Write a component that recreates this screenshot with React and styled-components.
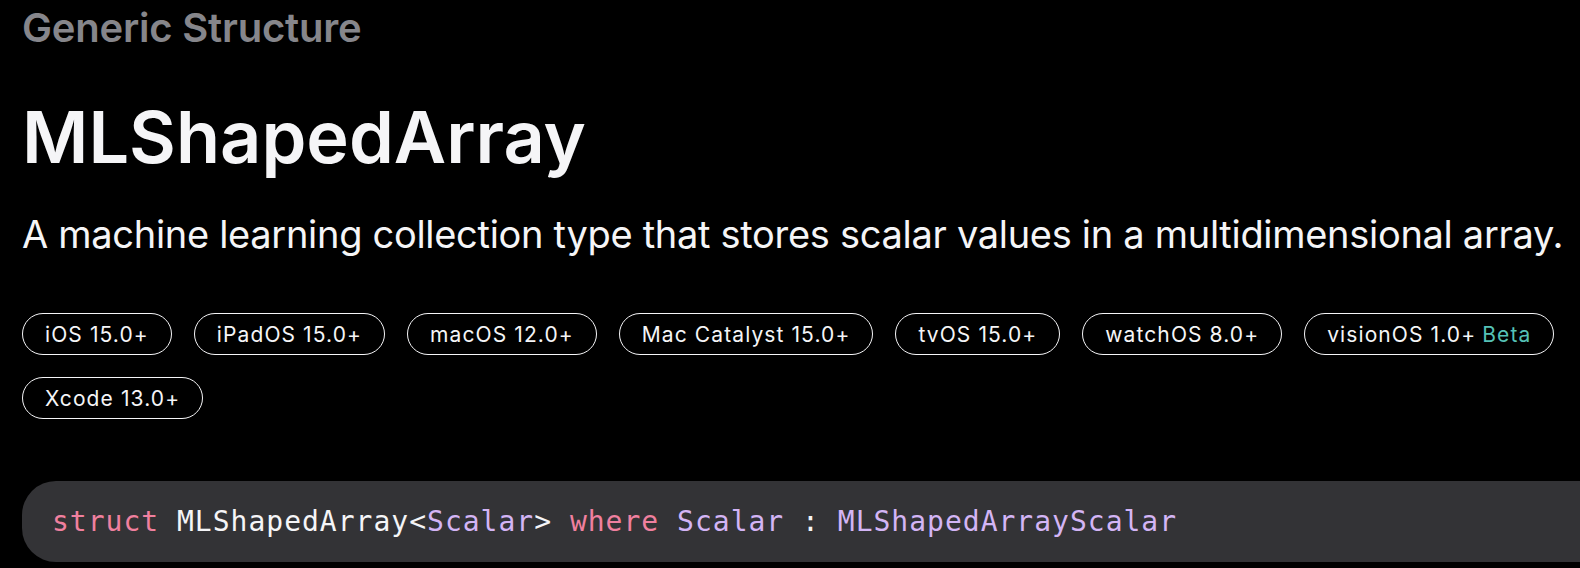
import React from "react";
import styled, { createGlobalStyle } from "styled-components";

const GlobalStyle = createGlobalStyle`
  html, body {
    margin: 0;
    padding: 0;
    background: #000;
  }
  body {
    overflow: hidden;
    font-family: Inter, "Noto Sans", "Liberation Sans", sans-serif;
    -webkit-font-smoothing: antialiased;
  }
`;

const Page = styled.main`
  padding: 4px 0 0 22px;
  overflow: hidden;
`;

const Eyebrow = styled.div`
  font-size: 40px;
  line-height: 48px;
  font-weight: 600;
  color: #86868b;
  letter-spacing: -0.2px;
`;

const Title = styled.h1`
  margin: 46px 0 0;
  font-size: 72px;
  line-height: 77px;
  font-weight: 600;
  color: #f5f5f7;
  letter-spacing: 0;
`;

const Abstract = styled.p`
  margin: 36px 0 0;
  font-size: 38px;
  line-height: 46px;
  font-weight: 400;
  color: #f5f5f7;
  letter-spacing: -0.3px;
`;

const Availability = styled.ul`
  list-style: none;
  margin: 56px 0 0;
  padding: 0;
  display: flex;
  flex-wrap: wrap;
  gap: 22px;
  max-width: 1540px;
`;

const Badge = styled.li`
  display: flex;
  align-items: center;
  height: 42px;
  box-sizing: border-box;
  padding: 0 22px;
  border: 1.5px solid #f5f5f7;
  border-radius: 21px;
  font-size: 21px;
  letter-spacing: 1.1px;
  color: #f5f5f7;
  white-space: nowrap;
`;

const BetaTag = styled.span`
  margin-left: 6px;
  color: #55c1b6;
`;

const Declaration = styled.pre`
  margin: 62px -80px 0 0;
  height: 81px;
  box-sizing: border-box;
  display: flex;
  align-items: center;
  padding: 0 30px;
  background: #333336;
  border-radius: 34px;
  font-family: "DejaVu Sans Mono", "Liberation Mono", monospace;
  font-size: 28px;
  line-height: 1;
  letter-spacing: 1px;
  color: #f5f5f7;
`;

const Token = styled.span`
  color: ${({ kind }) =>
    kind === "keyword" ? "#f0809f" : kind === "type" ? "#d3b5f5" : "#f5f5f7"};
`;

const platforms = [
  "iOS 15.0+",
  "iPadOS 15.0+",
  "macOS 12.0+",
  "Mac Catalyst 15.0+",
  "tvOS 15.0+",
  "watchOS 8.0+",
  { name: "visionOS 1.0+", beta: true },
  "Xcode 13.0+",
];

export default function App() {
  return (
    <>
      <GlobalStyle />
      <Page>
        <Eyebrow>Generic Structure</Eyebrow>
        <Title>MLShapedArray</Title>
        <Abstract>
          A machine learning collection type that stores scalar values in a
          multidimensional array.
        </Abstract>
        <Availability>
          {platforms.map((p) =>
            typeof p === "string" ? (
              <Badge key={p}>{p}</Badge>
            ) : (
              <Badge key={p.name}>
                {p.name}
                <BetaTag>Beta</BetaTag>
              </Badge>
            )
          )}
        </Availability>
        <Declaration>
          <code>
            <Token kind="keyword">struct</Token> MLShapedArray&lt;
            <Token kind="type">Scalar</Token>&gt;{" "}
            <Token kind="keyword">where</Token>{" "}
            <Token kind="type">Scalar</Token> :{" "}
            <Token kind="type">MLShapedArrayScalar</Token>
          </code>
        </Declaration>
      </Page>
    </>
  );
}
